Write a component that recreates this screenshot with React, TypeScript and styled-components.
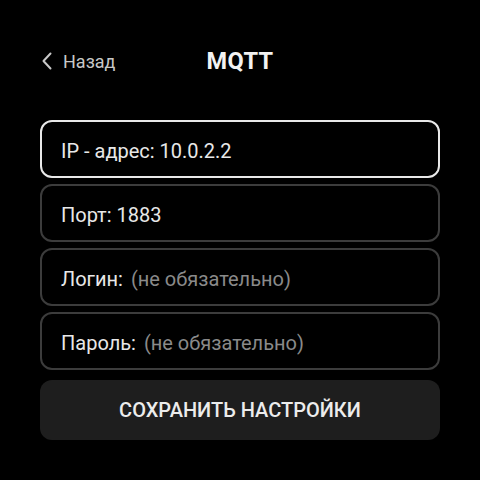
import React from "react";
import styled, { createGlobalStyle } from "styled-components";

const Global = createGlobalStyle`
  html, body { margin: 0; padding: 0; background: #000; }
  body { font-family: Roboto, "Noto Sans", sans-serif; }
`;

const Page = styled.div`
  width: 480px;
  height: 480px;
  background: #000;
  box-sizing: border-box;
  padding: 40px 40px 0;
  display: flex;
  flex-direction: column;
`;

const Header = styled.div`
  display: grid;
  grid-template-columns: 1fr auto 1fr;
  align-items: center;
  height: 42px;
  margin-bottom: 38px;
`;

const Back = styled.button`
  justify-self: start;
  display: flex;
  align-items: center;
  gap: 10px;
  background: none;
  border: none;
  padding: 0 0 0 1px;
  color: #c8c8c8;
  font-family: Roboto, sans-serif;
  font-size: 18px;
`;

const Title = styled.h1`
  margin: 0;
  color: #f2f2f2;
  font-size: 23.5px;
  font-weight: 700;
  letter-spacing: 0.3px;
`;

const Form = styled.div`
  display: flex;
  flex-direction: column;
  gap: 6px;
`;

const Field = styled.div<{ $active?: boolean }>`
  height: 58px;
  box-sizing: border-box;
  border: 2px solid ${(p) => (p.$active ? "#e8e8e8" : "#3c3c3c")};
  border-radius: 12px;
  display: flex;
  align-items: center;
  padding: 3px 19px 0;
  gap: 8px;
  font-size: 20px;
  color: #e8e8e8;
`;

const Hint = styled.span`
  color: #8a8a8a;
`;

const SaveButton = styled.button`
  margin-top: 4px;
  height: 60px;
  border: none;
  border-radius: 12px;
  background: #1e1e1e;
  color: #ececec;
  font-family: Roboto, sans-serif;
  font-size: 20px;
  font-weight: 500;
  text-transform: uppercase;
`;

export default function App() {
  return (
    <>
      <Global />
      <Page>
        <Header>
          <Back>
            <svg width="12" height="18" viewBox="0 0 12 18" fill="none">
              <path d="M9.5 1.5 L2.5 9 L9.5 16.5" stroke="#c8c8c8" strokeWidth="2" strokeLinecap="round" strokeLinejoin="round" />
            </svg>
            Назад
          </Back>
          <Title>MQTT</Title>
          <span />
        </Header>
        <Form>
          <Field $active>IP - адрес: 10.0.2.2</Field>
          <Field>Порт: 1883</Field>
          <Field>
            Логин: <Hint>(не обязательно)</Hint>
          </Field>
          <Field>
            Пароль: <Hint>(не обязательно)</Hint>
          </Field>
          <SaveButton>Сохранить настройки</SaveButton>
        </Form>
      </Page>
    </>
  );
}
